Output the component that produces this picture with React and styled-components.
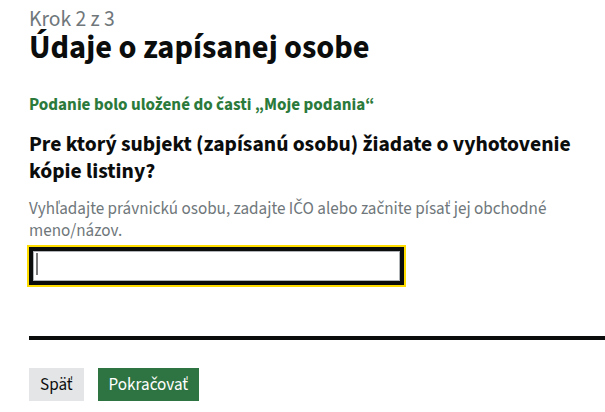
import React from 'react';
import styled, { createGlobalStyle } from 'styled-components';

const GlobalStyle = createGlobalStyle`
    html, body {
        margin: 0;
        padding: 0;
        background: #ffffff;
    }

    body {
        font-family: "Source Sans 3", "Source Sans Pro", Lato, "Noto Sans", sans-serif;
        color: #0b0c0c;
        overflow: hidden;
    }
`;

const Page = styled.main`
    padding: 9px 0 0 29px;
`;

const Caption = styled.span`
    display: block;
    font-size: 21.6px;
    line-height: 22px;
    font-weight: 400;
    color: #6f777b;
`;

const Title = styled.h1`
    margin: 0;
    font-size: 32.4px;
    line-height: 34px;
    font-weight: 700;
    color: #0b0c0c;
`;

const Notice = styled.p`
    margin: 30px 0 0 0;
    font-size: 17.1px;
    line-height: 20px;
    font-weight: 700;
    color: #2b7a3b;
`;

const Question = styled.h2`
    margin: 16px 0 0 0;
    font-size: 21.6px;
    line-height: 27px;
    font-weight: 700;
    color: #0b0c0c;
`;

const Hint = styled.p`
    margin: 13px 0 0 0;
    font-size: 17.1px;
    line-height: 22px;
    font-weight: 400;
    color: #6f777b;
`;

const Field = styled.div`
    position: relative;
    width: 375px;
    margin-top: 5px;
`;

const TextInput = styled.input`
    display: block;
    box-sizing: border-box;
    width: 100%;
    height: 38px;
    margin: 0;
    padding: 0 8px;
    border: 2px solid #0b0c0c;
    border-radius: 0;
    outline: 2px solid #ffdd00;
    box-shadow: inset 0 0 0 2px #0b0c0c, inset 0 0 0 3px #b1b4b6;
    font-family: inherit;
    font-size: 17.1px;
    color: #0b0c0c;
    background: #ffffff;
    caret-color: transparent;
`;

const Caret = styled.span`
    position: absolute;
    left: 7px;
    top: 6px;
    width: 2px;
    height: 22px;
    background: #7a7a7a;
`;

const Divider = styled.hr`
    margin: 51px 0 0 0;
    border: 0;
    height: 4px;
    background: #0b0c0c;
`;

const Actions = styled.div`
    display: flex;
    gap: 14px;
    margin-top: 28px;
`;

const Button = styled.button`
    height: 33px;
    padding: 0 11px;
    border: 0;
    border-radius: 0;
    font-family: inherit;
    font-size: 17.1px;
    line-height: 33px;
    font-weight: 400;
    cursor: pointer;
    color: ${p => (p.$primary ? '#ffffff' : '#0b0c0c')};
    background: ${p => (p.$primary ? '#2e7442' : '#e4e5e6')};
    box-shadow: 0 2px 0 ${p => (p.$primary ? '#1c3d26' : '#929191')};
`;

export default function App() {
    return (
        <>
            <GlobalStyle />
            <Page>
                <Caption>Krok 2 z 3</Caption>
                <Title>Údaje o zapísanej osobe</Title>
                <Notice>Podanie bolo uložené do časti „Moje podania“</Notice>
                <Question>Pre ktorý subjekt (zapísanú osobu) žiadate o vyhotovenie kópie listiny?</Question>
                <Hint>Vyhľadajte právnickú osobu, zadajte IČO alebo začnite písať jej obchodné meno/názov.</Hint>
                <Field>
                    <TextInput type="text" aria-label="Subjekt" />
                    <Caret />
                </Field>
                <Divider />
                <Actions>
                    <Button type="button">Späť</Button>
                    <Button type="button" $primary>Pokračovať</Button>
                </Actions>
            </Page>
        </>
    );
}
